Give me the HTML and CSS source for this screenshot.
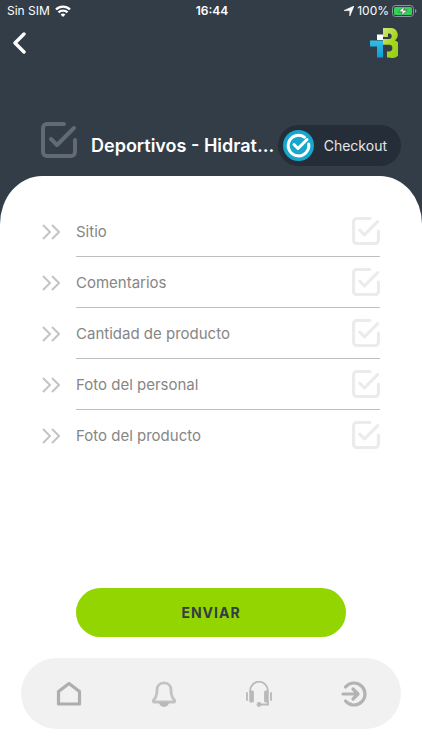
FILE: index.html
```html
<!DOCTYPE html>
<html lang="es">
<head>
    <meta charset="UTF-8">
    <meta name="viewport" content="width=device-width, initial-scale=1">
    <title>Checkout</title>
    <link rel="stylesheet" href="styles.css">
</head>
<body>
    <!-- Shared icons -->
    <svg class="symbols" aria-hidden="true">
        <symbol id="check-box" viewBox="0 0 36 36">
            <path d="M23 2H6a4 4 0 0 0-4 4v24a4 4 0 0 0 4 4h24a4 4 0 0 0 4-4V18M10 17l6 6L33 6" fill="none" stroke="currentColor" stroke-width="4" stroke-linecap="round" stroke-linejoin="round"/>
        </symbol>
        <symbol id="arrows" viewBox="0 0 18 16">
            <path d="M1 1l7 7-7 7M10 1l7 7-7 7" fill="none" stroke="currentColor" stroke-width="2"/>
        </symbol>
    </svg>

    <header class="header">
        <div class="status-bar">
            <div class="status-left">
                <span>Sin SIM</span>
                <svg width="16" height="12" viewBox="0 0 16 12" fill="none" stroke="#fff" stroke-width="2.400">
                    <path d="M1 4.500a10 10 0 0 1 14 0M3.500 7.400a6.500 6.500 0 0 1 9 0"/>
                    <path d="M8 12L5.600 9.600a3.400 3.400 0 0 1 4.800 0z" fill="#fff" stroke="none"/>
                </svg>
            </div>
            <div class="status-time">16:44</div>
            <div class="status-right">
                <svg width="10" height="10" viewBox="0 0 10 10"><path d="M10 0L5.800 10V4.600H0z" fill="#fff" stroke="#fff" stroke-width=".6" stroke-linejoin="round"/></svg>
                <span>100%</span>
                <svg width="25" height="12" viewBox="0 0 25 12">
                    <rect x=".5" y=".5" width="21" height="11" rx="3" fill="none" stroke="#8c959b"/>
                    <rect x="2" y="2" width="18" height="8" rx="1.500" fill="#32d158"/>
                    <path d="M23 4v4q1.500-.5 1.500-2T23 4z" fill="#8c959b"/>
                    <path d="M12.500 1L6.500 6.800h3.800L9.300 11l6-5.800h-3.800z" fill="#fff" stroke="#323d47" stroke-width=".6"/>
                </svg>
            </div>
        </div>

        <div class="top-bar">
            <button type="button" class="back" aria-label="Volver">
                <svg width="14" height="22" viewBox="0 0 14 22"><path d="M12 2L3 11l9 9" fill="none" stroke="#fff" stroke-width="3.400" stroke-linecap="round" stroke-linejoin="round"/></svg>
            </button>
            <svg class="brand" width="28" height="30" viewBox="0 0 28 30">
                <defs>
                    <linearGradient id="green" x1="0" y1="0" x2="1" y2="1">
                        <stop offset="0" stop-color="#d3e77c"/>
                        <stop offset=".5" stop-color="#a5d61e"/>
                        <stop offset="1" stop-color="#8fce10"/>
                    </linearGradient>
                    <linearGradient id="blue" x1="0" y1="0" x2="0" y2="1">
                        <stop offset="0" stop-color="#35bde2"/>
                        <stop offset="1" stop-color="#0b9ed8"/>
                    </linearGradient>
                </defs>
                <path d="M13 0h7a7 7 0 0 1 5 12.500A8.800 8.800 0 0 1 19 29.500h-2v-6h2a3.400 3.400 0 0 0 0-6.800h-6V11h6a2.700 2.700 0 0 0 0-5.400h-1V9h-5z" fill="url(#green)"/>
                <path d="M7 6.500h6V12H7z" fill="#fff"/>
                <path d="M0 12.500h13v17H7V18.500H0z" fill="url(#blue)"/>
            </svg>
        </div>

        <div class="title-row">
            <svg class="title-icon"><use href="#check-box"/></svg>
            <h1>Deportivos - Hidrat...</h1>
            <button type="button" class="checkout">
                <svg width="31" height="31" viewBox="0 0 31 31" fill="none" stroke="#fff" stroke-width="3">
                    <circle cx="15.500" cy="15.500" r="15.500" fill="#18a6cd" stroke="none"/>
                    <path d="M21.500 7.200A10.300 10.300 0 1 0 25.700 14" stroke-linecap="round"/>
                    <path d="M11 14.500l4 4 9-9" stroke-linecap="round" stroke-linejoin="round"/>
                </svg>
                <span>Checkout</span>
            </button>
        </div>
    </header>

    <main class="panel">
        <form class="form">
            <ul class="steps">
                <li>
                    <svg class="arrows"><use href="#arrows"/></svg>
                    <div class="step">
                        <label for="sitio">Sitio</label>
                        <span class="tick"><input type="checkbox" id="sitio"><svg><use href="#check-box"/></svg></span>
                    </div>
                </li>
                <li>
                    <svg class="arrows"><use href="#arrows"/></svg>
                    <div class="step">
                        <label for="comentarios">Comentarios</label>
                        <span class="tick"><input type="checkbox" id="comentarios"><svg><use href="#check-box"/></svg></span>
                    </div>
                </li>
                <li>
                    <svg class="arrows"><use href="#arrows"/></svg>
                    <div class="step">
                        <label for="cantidad">Cantidad de producto</label>
                        <span class="tick"><input type="checkbox" id="cantidad"><svg><use href="#check-box"/></svg></span>
                    </div>
                </li>
                <li>
                    <svg class="arrows"><use href="#arrows"/></svg>
                    <div class="step">
                        <label for="personal">Foto del personal</label>
                        <span class="tick"><input type="checkbox" id="personal"><svg><use href="#check-box"/></svg></span>
                    </div>
                </li>
                <li>
                    <svg class="arrows"><use href="#arrows"/></svg>
                    <div class="step">
                        <label for="producto">Foto del producto</label>
                        <span class="tick"><input type="checkbox" id="producto"><svg><use href="#check-box"/></svg></span>
                    </div>
                </li>
            </ul>

            <button type="submit" class="send">ENVIAR</button>
        </form>

        <nav class="nav">
            <a href="#inicio" aria-label="Inicio">
                <svg width="26" height="26" viewBox="0 0 26 26"><path d="M2.500 10.500V23h21V10.500L13 2.500z" fill="none" stroke="#aeaeae" stroke-width="3.200" stroke-linejoin="round"/></svg>
            </a>
            <a href="#avisos" aria-label="Avisos">
                <svg width="26" height="26" viewBox="0 0 26 26">
                    <path d="M13 1.800c-4.500 0-7 3.200-7 7.200 0 5-.8 7.500-3.300 10-.8.900-.3 2 .8 2h19c1.100 0 1.600-1.100.8-2C20.800 16.500 20 14 20 9c0-4-2.500-7.200-7-7.200z" fill="none" stroke="#c2c2c2" stroke-width="2.800"/>
                    <path d="M8 21h10a5 5 0 0 1-10 0z" fill="#b9b9b9"/>
                </svg>
            </a>
            <a href="#soporte" aria-label="Soporte">
                <svg width="26" height="26" viewBox="0 0 26 26" fill="none" stroke="#b9b9b9">
                    <path d="M4.200 11V9.500a8.800 8.800 0 0 1 17.600 0V11M22 20v3.500h-9" stroke-width="1.800"/>
                    <path d="M1 12v7M25 12v7" stroke-width="1.800" stroke-linecap="round"/>
                    <rect x="3.300" y="9.500" width="4.600" height="12" rx="1.500" fill="#b9b9b9" stroke="none"/>
                    <rect x="18.100" y="9.500" width="4.600" height="12" rx="1.500" fill="#b9b9b9" stroke="none"/>
                    <circle cx="13" cy="23.500" r="2.400" fill="#b9b9b9" stroke="none"/>
                </svg>
            </a>
            <a href="#salir" aria-label="Salir">
                <svg width="26" height="26" viewBox="0 0 26 26" fill="none" stroke="#b3b3b3" stroke-width="3.200" stroke-linecap="round" stroke-linejoin="round">
                    <path d="M4.500 6a11 11 0 1 1 0 14"/>
                    <path d="M2 13h14M12 8l5 5-5 5"/>
                </svg>
            </a>
        </nav>
    </main>
</body>
</html>
```
FILE: styles.css
```css
* {
    box-sizing: border-box;
}

body {
    display: flex;
    flex-direction: column;
    min-height: 100vh;
    margin: 0;
    background-color: #323d47;
    font-family: Inter, "Liberation Sans", sans-serif;
}

svg {
    display: block;
    flex-shrink: 0;
}

button {
    border: none;
    padding: 0;
    font-family: inherit;
    cursor: pointer;
}

.symbols {
    position: absolute;
    width: 0;
    height: 0;
}

.header {
    color: #ffffff;
}

/* Status bar */
.status-bar {
    display: grid;
    grid-template-columns: 1fr auto 1fr;
    align-items: center;
    height: 22px;
    padding: 0 5px 0 7px;
    font-size: 12px;
    line-height: 22px;
}

.status-left, .status-right {
    display: flex;
    align-items: center;
    gap: 5px;
}

.status-right {
    justify-content: flex-end;
    gap: 3px;
}

.status-time {
    font-size: 12px;
    font-weight: 600;
}

.top-bar {
    display: flex;
    justify-content: space-between;
    align-items: center;
    height: 42px;
    padding: 0 24px 0 12px;
}

.back {
    background: none;
}

.title-row {
    display: flex;
    align-items: center;
    height: 46px;
    margin: 58px 21px 8px 41px;
}

.title-icon {
    align-self: flex-start;
    width: 36px;
    height: 36px;
    margin-right: 14px;
    color: #626b74;
}

h1 {
    flex: 1;
    margin: 0;
    font-size: 18px;
    font-weight: 600;
    white-space: nowrap;
}

.checkout {
    display: flex;
    align-items: center;
    gap: 10px;
    height: 41px;
    padding: 0 14px 0 5px;
    border-radius: 21px;
    background-color: #252e38;
    color: #e4e6e8;
    font-size: 14px;
}

/* White sheet */
.panel {
    flex: 1;
    display: flex;
    flex-direction: column;
    padding: 30px 21px 21px;
    border-radius: 42px 42px 0 0 / 48px 48px 0 0;
    background-color: #ffffff;
}

.form {
    flex: 1;
    display: flex;
    flex-direction: column;
}

.steps {
    margin: 0 21px;
    padding: 0;
    list-style: none;
}

.steps li {
    display: flex;
    align-items: center;
    gap: 16px;
}

.arrows {
    width: 18px;
    height: 16px;
    color: #c4c4c4;
}

.step {
    flex: 1;
    display: flex;
    justify-content: space-between;
    align-items: center;
    height: 51px;
    border-bottom: 1px solid #bfbfbf;
}

.steps li:last-child .step {
    border-bottom-color: transparent;
}

.step label {
    color: #868686;
    font-size: 15px;
}

.tick {
    display: grid;
    color: #ebebeb;
}

.tick input, .tick svg {
    grid-area: 1 / 1;
    width: 28px;
    height: 28px;
    margin: 0;
}

.tick input {
    appearance: none;
    cursor: pointer;
}

.tick svg {
    pointer-events: none;
}

.tick input:checked + svg {
    color: #93d500;
}

.send {
    height: 49px;
    margin: auto 55px 21px;
    border-radius: 25px;
    background-color: #93d500;
    color: #323d47;
    font-size: 14px;
    font-weight: 700;
    letter-spacing: 1px;
}

.nav {
    display: grid;
    grid-template-columns: repeat(4, 1fr);
    align-items: center;
    justify-items: center;
    height: 71px;
    border-radius: 36px;
    background-color: #f1f1f1;
}
```
